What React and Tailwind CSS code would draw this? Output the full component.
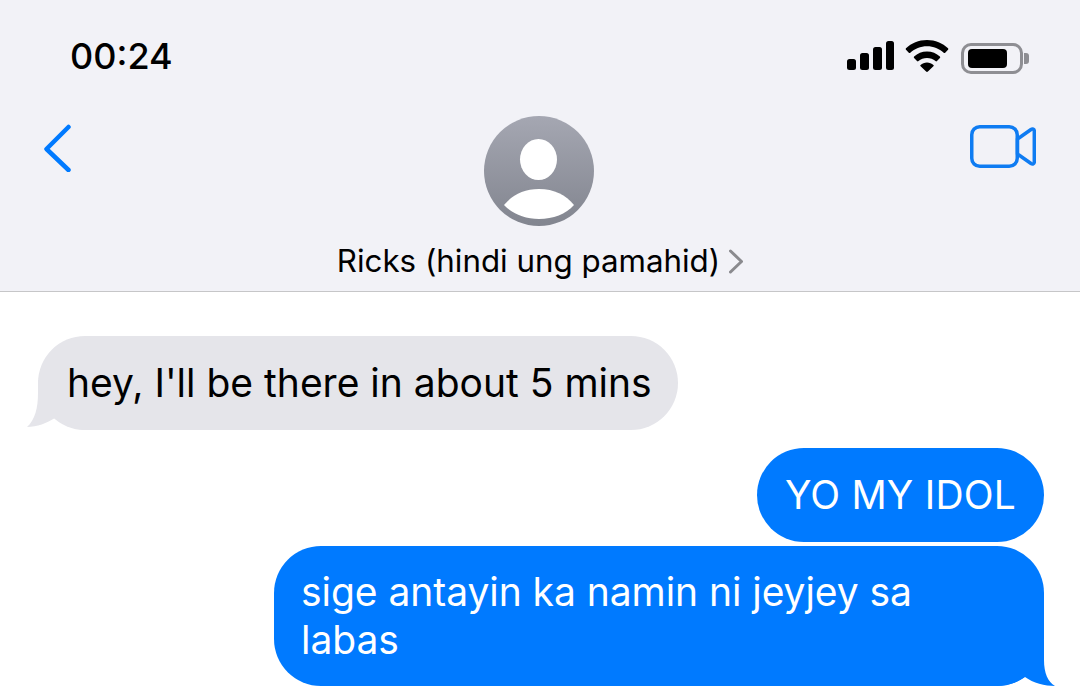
import React from 'react';

const font = { fontFamily: 'Inter, "Liberation Sans", sans-serif' };

const StatusIcons = () => (
  <div className="flex items-center">
    <svg width="48" height="30" viewBox="0 0 48 30" fill="#000">
      <rect x="0" y="18" width="9" height="11" rx="2.5" />
      <rect x="13" y="12" width="9" height="17" rx="2.5" />
      <rect x="26" y="6" width="9" height="23" rx="2.5" />
      <rect x="39" y="0" width="8" height="29" rx="2.5" />
    </svg>
    <svg className="ml-[10px]" width="44" height="32" viewBox="0 0 44 32" fill="#000">
      <path d="M22 0C13.6 0 6.4 3.2 1 8.2c-.5.5-.5 1 0 1.500l2.800 3c.5.500 1 .500 1.500.100C9.700 8.800 15.500 6.300 22 6.300s12.300 2.500 16.700 6.500c.5.400 1 .400 1.500-.100l2.800-3c.5-.5.500-1 0-1.500C37.600 3.200 30.400 0 22 0Z" />
      <path d="M22 11.500c-5 0-9.500 1.900-12.900 5-.5.500-.5 1 0 1.500l2.900 3c.5.500 1 .500 1.500.100 2.300-2 5.200-3.200 8.500-3.200s6.200 1.200 8.500 3.200c.5.400 1 .400 1.500-.100l2.900-3c.5-.5.500-1 0-1.500-3.400-3.100-7.900-5-12.900-5Z" />
      <path d="M22 22.500c-2.500 0-4.700.900-6.400 2.400-.5.400-.5.900 0 1.400l5.500 5.300c.5.500 1.300.500 1.800 0l5.500-5.300c.5-.5.500-1 0-1.400-1.700-1.500-3.900-2.400-6.400-2.400Z" />
    </svg>
    <div className="ml-[12px] mt-[4px] flex items-center">
      <div className="flex h-[31px] w-[62px] items-center rounded-[10px] border-[3px] border-[#8e8e93] py-[3px] pl-[4px]">
        <div className="h-full w-[39px] rounded-[4px] bg-black" />
      </div>
      <div className="ml-[1px] h-[11px] w-[5px] rounded-r-[3px] bg-[#8e8e93]" />
    </div>
  </div>
);

const BackIcon = () => (
  <svg width="30" height="48" viewBox="0 0 30 48" fill="none" stroke="#007aff" strokeWidth="4.500" strokeLinecap="round" strokeLinejoin="round">
    <path d="M26.500 3 4.500 25l22 21" />
  </svg>
);

const VideoIcon = () => (
  <svg width="66" height="43" viewBox="0 0 66 43" fill="none" stroke="#0f7cf2" strokeWidth="3.500" strokeLinejoin="round">
    <rect x="1.750" y="1.750" width="45.500" height="39.500" rx="8" />
    <path d="M47.500 14 61 4.500c1.500-1 3.300-.300 3.300 1.500v31c0 1.800-1.800 2.500-3.300 1.500L47.500 29Z" />
  </svg>
);

const Avatar = () => (
  <div className="h-[110px] w-[110px] rounded-full bg-gradient-to-b from-[#a5a7b2] to-[#82858f]">
    <svg width="110" height="110" viewBox="0 0 110 110" fill="#fff">
      <ellipse cx="54.500" cy="43.500" rx="18.500" ry="20.500" />
      <path d="M20 89C28 79 40 73 55 73s27 6 35 16C82 98 69 103 55 103S28 98 20 89Z" />
    </svg>
  </div>
);

const Bubble = ({ sent, className, children }) => (
  <div className={`relative rounded-[47px] text-[39px] leading-[48px] ${sent ? 'bg-[#007aff] text-white' : 'bg-[#e5e5ea] text-black'} ${className}`}>
    {children}
  </div>
);

// tails sit over the bubble's bottom corner and hide its rounding
const TailLeft = () => (
  <svg className="absolute bottom-0 left-[-11px]" width="60" height="50" viewBox="0 0 60 50" fill="#e5e5ea">
    <path d="M60 0H11V13C11 28 8 40 0 47C10 47 20 43 28 38C36 44 46 50 60 50Z" />
  </svg>
);

const TailRight = () => (
  <svg className="absolute bottom-0 right-[-12px]" width="61" height="46" viewBox="0 0 61 46" fill="#007aff">
    <path d="M0 0H49V20C49 33 53 42 60 46C50 46 38 43 30 37C22 43 12 46 0 46Z" />
  </svg>
);

export default function App() {
  return (
    <div className="h-[699px] w-[1080px] overflow-hidden bg-white" style={font}>
      <header className="h-[292px] border-b border-[#c6c6c8] bg-[#f2f2f7]">
        <div className="flex items-center justify-between pl-[70px] pr-[51px] pt-[32px]">
          <span className="text-[36px] font-medium leading-[48px] text-black">00:24</span>
          <StatusIcons />
        </div>
        <div className="mt-[36px] grid grid-cols-[1fr_auto_1fr] items-start pl-[42px] pr-[44px]">
          <div className="mt-[8px]"><BackIcon /></div>
          <div className="flex flex-col items-center">
            <Avatar />
            <div className="ml-[2px] mt-[13px] flex items-center text-[31.3px] leading-[44px] text-black">
              <span>Ricks (hindi ung pamahid)</span>
              <svg className="ml-[9px]" width="14" height="25" viewBox="0 0 14 25" fill="none" stroke="#8a8a8e" strokeWidth="3" strokeLinecap="round" strokeLinejoin="round">
                <path d="M1.500 2l11 10.500L1.500 23" />
              </svg>
            </div>
          </div>
          <div className="mt-[9px] justify-self-end"><VideoIcon /></div>
        </div>
      </header>
      <main className="flex flex-col pl-[38px] pr-[36px] pt-[44px]">
        <Bubble className="self-start py-[23px] pl-[29px] pr-[26px]">
          <TailLeft />
          <span className="relative">hey, I'll be there in about 5 mins</span>
        </Bubble>
        <Bubble sent className="mt-[18px] self-end px-[28px] py-[23px] tracking-[0.2px]">YO MY IDOL</Bubble>
        <Bubble sent className="mt-[4px] w-[770px] self-end px-[27px] py-[22px] tracking-[-0.05px]">
          <TailRight />
          <span className="relative">sige antayin ka namin ni jeyjey sa<br />labas</span>
        </Bubble>
      </main>
    </div>
  );
}
